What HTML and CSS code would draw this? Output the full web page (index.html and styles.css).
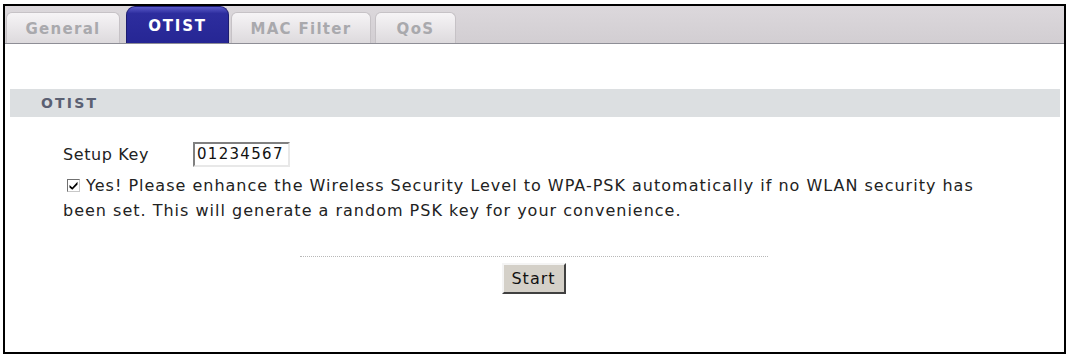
FILE: index.html
```html
<!DOCTYPE html>
<html>
<head>
<meta charset="utf-8">
<link rel="stylesheet" href="styles.css">
</head>
<body>
<div class="frame">
  <div class="tabbar">
    <div class="tab tab-general">General</div>
    <div class="tab active">OTIST</div>
    <div class="tab tab-mac">MAC Filter</div>
    <div class="tab tab-qos">QoS</div>
  </div>
  <div class="section-head">OTIST</div>
  <div class="content">
    <div class="row">
      <span class="label">Setup Key</span>
      <span class="input">01234567</span>
    </div>
    <p class="note"><span class="check"><svg width="9" height="9" viewBox="0 0 9 9"><path d="M0.5 4 L3.3 6.4 L8.5 0.8 L8.5 3.4 L3.3 8.8 L0.5 6.4 Z" fill="#000"/></svg></span> Yes! Please enhance the Wireless Security Level to WPA-PSK automatically if no WLAN security has been set. This will generate a random PSK key for your convenience.</p>
    <div class="actions">
      <div class="dots"></div>
      <span class="btn">Start</span>
    </div>
  </div>
</div>
</body>
</html>
```

FILE: styles.css
```css
html, body {
  margin: 0;
  padding: 0;
  background: #fff;
}
body {
  font-family: "DejaVu Sans", Verdana, sans-serif;
  font-size: 16px;
  letter-spacing: 1px;
  color: #222;
}
.frame {
  margin: 4px 4px 0 3px;
  height: 346px;
  border: 2px solid #000;
  background: #fff;
}
.tabbar {
  display: flex;
  align-items: flex-end;
  height: 37px;
  padding-left: 1px;
  background: linear-gradient(#dcd8dc, #d2ced2);
  border-bottom: 1px solid #8e8e96;
}
.tab {
  height: 31px;
  box-sizing: border-box;
  display: flex;
  align-items: center;
  justify-content: center;
  padding-top: 1px;
  font-weight: bold;
  font-size: 15px;
  letter-spacing: 1.3px;
  color: #a9a9ad;
  border-radius: 6px 6px 0 0;
  background: linear-gradient(#f6f4f6, #dddadd);
  border: 1px solid #c6c2c6;
  border-bottom: none;
}
.tab-general { width: 114px; }
.tab-mac { width: 140px; margin-left: 2px; }
.tab-qos { width: 81px; margin-left: 4px; }
.tab.active {
  width: 103px;
  height: 37px;
  margin-left: 6px;
  padding-top: 2px;
  color: #fff;
  font-size: 15px;
  letter-spacing: 1.8px;
  border-radius: 9px 9px 0 0;
  background: linear-gradient(#5a5ac8 0%, #2d2d9e 18%, #262694 100%);
  border: 1px solid #1c1c70;
  border-bottom: none;
}
.section-head {
  margin: 45px 4px 0 5px;
  height: 28px;
  background: #dcdfe1;
  display: flex;
  align-items: center;
  padding-left: 31px;
  font-weight: bold;
  font-size: 14px;
  color: #5a6072;
  letter-spacing: 2.2px;
}
.content {
  padding: 24px 0 0 58px;
}
.row {
  display: flex;
  align-items: center;
  height: 26px;
}
.label {
  width: 130px;
  letter-spacing: 0.6px;
}
.input {
  width: 97px;
  height: 25px;
  box-sizing: border-box;
  border: 2px solid;
  border-color: #808080 #e8e8e8 #e8e8e8 #808080;
  padding: 0 2px 0 2px;
  line-height: 21px;
  font-size: 15px;
  letter-spacing: 1.3px;
  color: #111;
}
.note {
  margin: 6px 70px 0 0;
  line-height: 25px;
}
.check {
  display: inline-block;
  width: 13px;
  height: 13px;
  margin-left: 4px;
  border: 1px solid;
  border-color: #707070 #c8c8c8 #c8c8c8 #707070;
  background: #fff;
  position: relative;
  top: 1px;
  box-sizing: border-box;
}
.check svg {
  display: block;
  margin: 1px 0 0 1px;
}
.actions {
  display: flex;
  flex-direction: column;
  align-items: center;
  margin-top: 33px;
  margin-left: -58px;
}
.dots {
  width: 468px;
  border-top: 1px dotted #b8b8b8;
  margin-left: -1px;
}
.btn {
  margin-top: 6px;
  margin-left: -2px;
  width: 64px;
  height: 31px;
  box-sizing: border-box;
  display: flex;
  align-items: center;
  justify-content: center;
  background: #d4d0c8;
  border: 2px solid;
  border-color: #f4f4f4 #404040 #404040 #f4f4f4;
  font-size: 16px;
  letter-spacing: 1px;
  color: #111;
}
```
